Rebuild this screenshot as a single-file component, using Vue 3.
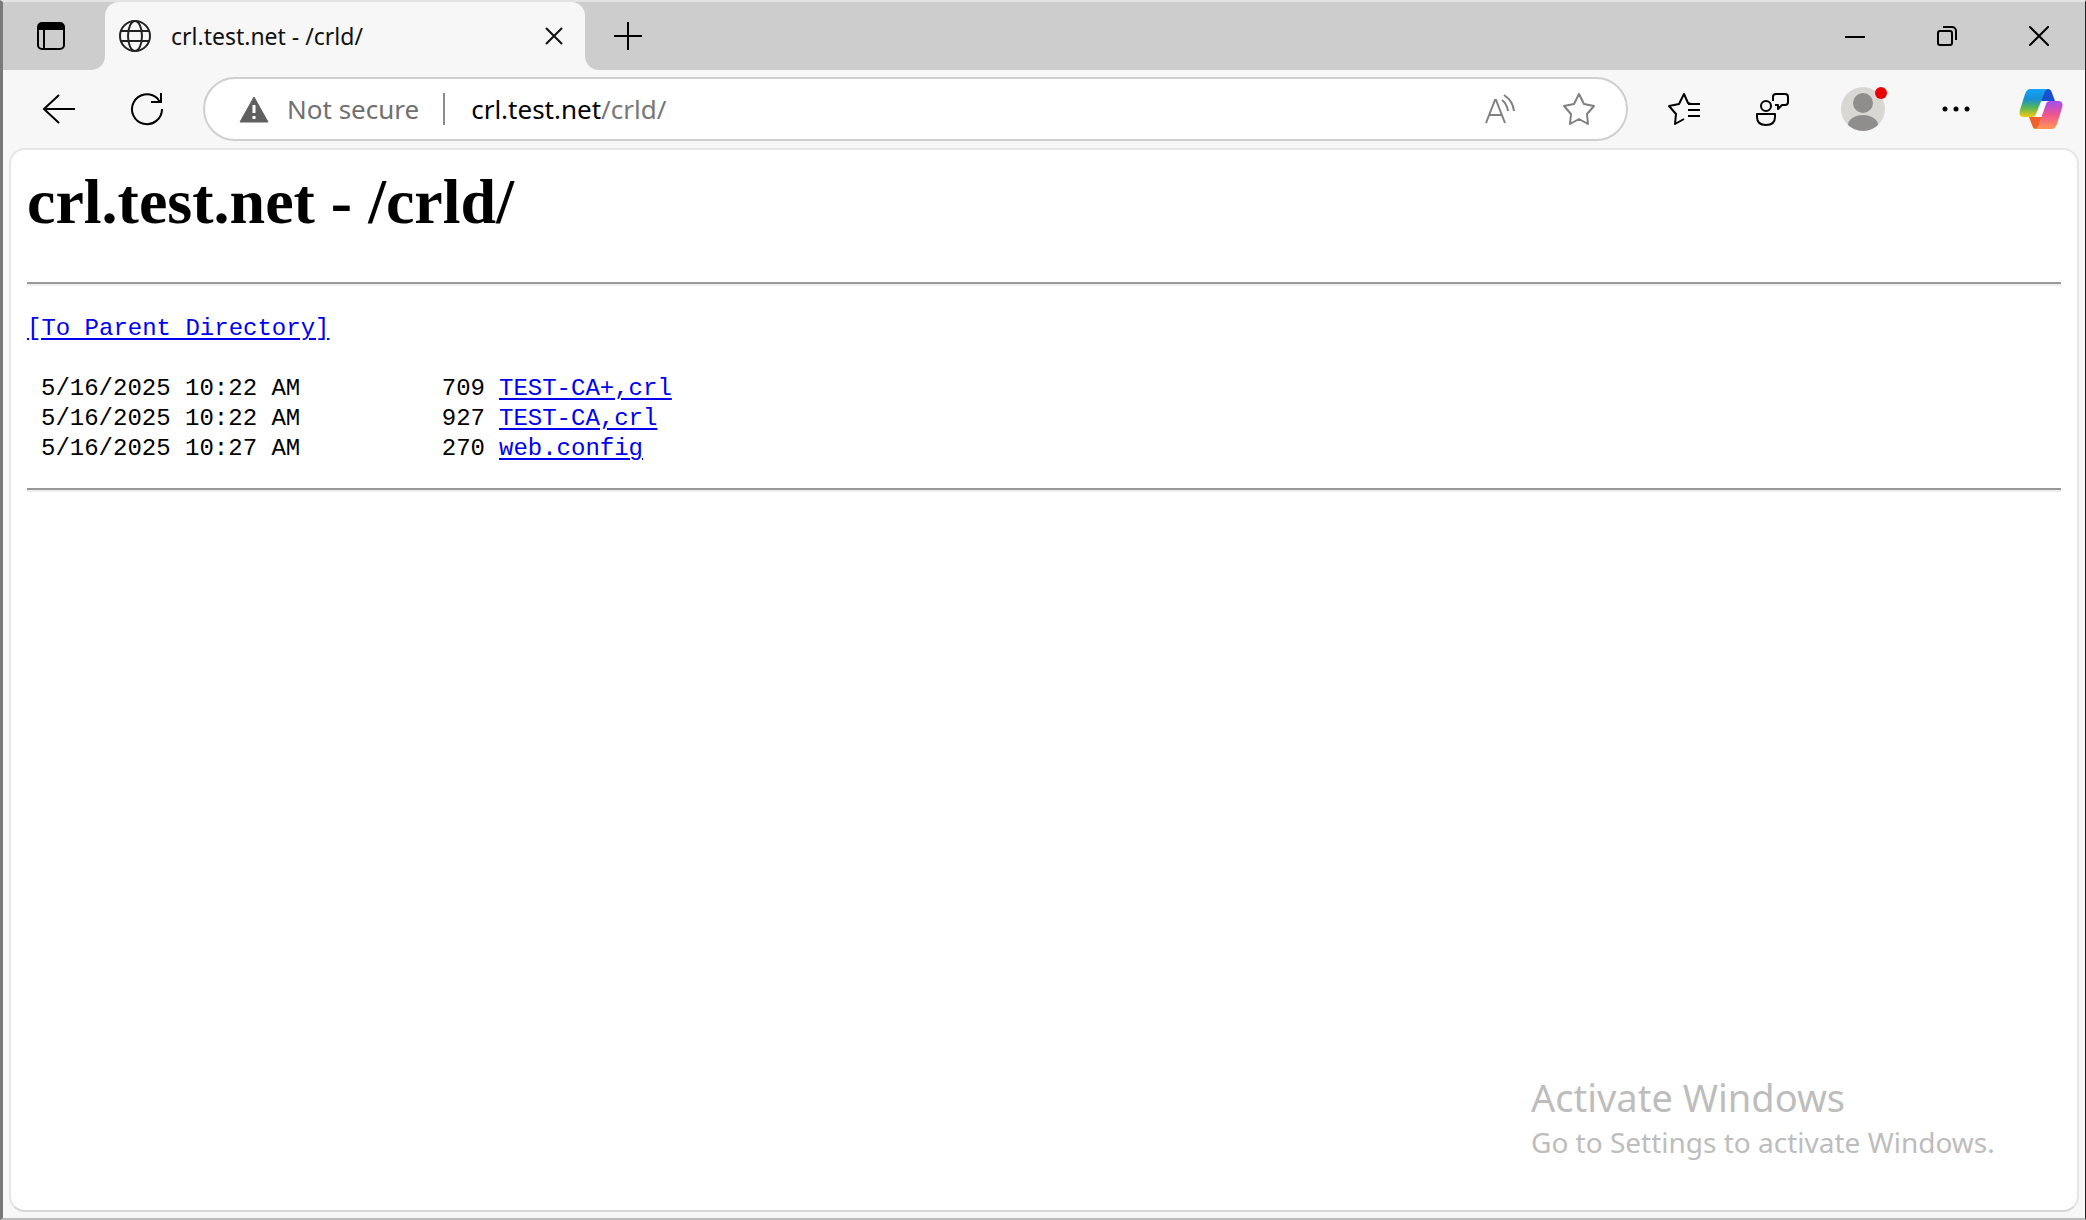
<template>
  <div class="window">
    <header class="tab-strip">
      <button type="button" class="icon-btn tab-actions" aria-label="Tab actions menu">
        <svg width="28" height="28" viewBox="0 0 28 28">
          <rect x="1" y="1" width="26" height="26" rx="4" fill="none" stroke="#000" stroke-width="2" />
          <path d="M1 8V4a3 3 0 0 1 3-3h20a3 3 0 0 1 3 3v4z" />
          <path d="M7 8v19" stroke="#000" stroke-width="2" />
        </svg>
      </button>
      <div class="tab">
        <svg class="globe" width="34" height="34" viewBox="0 0 34 34">
          <g fill="none" stroke="#222" stroke-width="2">
            <circle cx="17" cy="17" r="15" />
            <ellipse cx="17" cy="17" rx="7" ry="15" />
            <path d="M3 12h28M3 22h28" />
          </g>
        </svg>
        <span class="tab-title">{{ title }}</span>
        <button type="button" class="icon-btn tab-close" aria-label="Close tab">
          <svg width="18" height="18" viewBox="0 0 18 18">
            <path d="M1 1l16 16M17 1L1 17" stroke="#111" stroke-width="2" />
          </svg>
        </button>
      </div>
      <button type="button" class="icon-btn new-tab" aria-label="New tab">
        <svg width="30" height="30" viewBox="0 0 30 30">
          <path d="M15 1v28M1 15h28" stroke="#000" stroke-width="2" />
        </svg>
      </button>
      <div class="caption-buttons">
        <button type="button" class="icon-btn caption" aria-label="Minimize">
          <svg width="20" height="20" viewBox="0 0 20 20"><path d="M0 11h20" stroke="#000" stroke-width="2" /></svg>
        </button>
        <button type="button" class="icon-btn caption" aria-label="Restore">
          <svg width="20" height="20" viewBox="0 0 20 20" fill="none" stroke="#000" stroke-width="2">
            <rect x="1" y="5" width="14" height="14" rx="2" />
            <path d="M6 1h9a4 4 0 0 1 4 4v9" />
          </svg>
        </button>
        <button type="button" class="icon-btn caption" aria-label="Close">
          <svg width="20" height="20" viewBox="0 0 20 20"><path d="M0 0l20 20M20 0L0 20" stroke="#000" stroke-width="2" /></svg>
        </button>
      </div>
    </header>

    <nav class="toolbar">
      <button type="button" class="icon-btn nav-btn" aria-label="Back">
        <svg width="34" height="34" viewBox="0 0 34 34" fill="none" stroke="#000" stroke-width="2">
          <path d="M33 17H2M17 3L2 17l15 14" />
        </svg>
      </button>
      <button type="button" class="icon-btn nav-btn" aria-label="Refresh">
        <svg width="34" height="34" viewBox="0 0 34 34" fill="none" stroke="#000" stroke-width="2">
          <path d="M32 17A15 15 0 1 1 27 6l3 4" />
          <path d="M31 1v9H21" />
        </svg>
      </button>

      <div class="address-bar">
        <button type="button" class="icon-btn security">
          <svg width="30" height="27" viewBox="0 0 30 27">
            <path d="M15 1L29 26H1z" fill="#606060" stroke="#606060" stroke-linejoin="round" />
            <path d="M15 9v8M15 20v3" stroke="#fff" stroke-width="3" />
          </svg>
          <span>Not secure</span>
        </button>
        <span class="divider"></span>
        <a class="url" href="#">crl.test.net<span class="url-path">/crld/</span></a>
        <button type="button" class="icon-btn read-aloud" aria-label="Read aloud">
          <svg width="32" height="30" viewBox="0 0 32 30" fill="none" stroke="#808080" stroke-width="2">
            <path d="M2 29L11 6h1l9 23M5 21h13" />
            <path d="M18 6q5 4 6 11M20 1q9 6 10 16" />
          </svg>
        </button>
        <button type="button" class="icon-btn favorite" aria-label="Add to favorites">
          <svg width="34" height="34" viewBox="0 0 34 34" fill="none" stroke="#808080" stroke-width="2" stroke-linejoin="round">
            <path d="M17 2l5 10 10 2-7 8 1 10-9-5-9 5 1-10-7-8 10-2z" />
          </svg>
        </button>
      </div>

      <div class="actions">
        <button type="button" class="icon-btn action" aria-label="Favorites">
          <svg width="34" height="34" viewBox="0 0 34 34" fill="none" stroke="#000" stroke-width="2" stroke-linejoin="round">
            <path d="M24 12l-3-1-4-9-5 10-10 2 7 8-1 10 9-5" />
            <path d="M21 12h12M21 18h12M21 24h12" />
          </svg>
        </button>
        <button type="button" class="icon-btn action" aria-label="Send feedback">
          <svg width="34" height="34" viewBox="0 0 34 34" fill="none" stroke="#000" stroke-width="2" stroke-linejoin="round">
            <circle cx="11" cy="14" r="5" />
            <path d="M2 22h18v3q0 8-9 8t-9-8z" />
            <path d="M18 9V5q0-3 3-3h9q3 0 3 3v5q0 3-3 3h-3l-4 4v-4h-3" />
          </svg>
        </button>
        <button type="button" class="icon-btn action profile" aria-label="Profile">
          <svg width="46" height="46" viewBox="0 0 46 46">
            <defs>
              <clipPath id="face"><circle cx="22" cy="23" r="22" /></clipPath>
            </defs>
            <circle cx="22" cy="23" r="22" fill="#d9d7d4" />
            <g clip-path="url(#face)" fill="#8f8e8d">
              <circle cx="22" cy="17" r="10" />
              <ellipse cx="22" cy="39" rx="15" ry="10" />
            </g>
            <circle cx="40" cy="7" r="6" fill="#eb0000" />
          </svg>
        </button>
        <button type="button" class="icon-btn action" aria-label="Settings and more">
          <svg width="28" height="6" viewBox="0 0 28 6">
            <circle cx="3" cy="3" r="2.5" />
            <circle cx="14" cy="3" r="2.5" />
            <circle cx="25" cy="3" r="2.5" />
          </svg>
        </button>
        <button type="button" class="icon-btn action copilot" aria-label="Copilot">
          <svg width="44" height="42" viewBox="0 0 44 42">
            <defs>
              <linearGradient id="cool" x1="0" y1="0" x2="0" y2="1">
                <stop offset="0" stop-color="#16a5f5" />
                <stop offset=".35" stop-color="#168fd6" />
                <stop offset=".65" stop-color="#52b55a" />
                <stop offset="1" stop-color="#f5cb12" />
              </linearGradient>
              <linearGradient id="warm" x1="0" y1="0" x2="0" y2="1">
                <stop offset="0" stop-color="#a24cf0" />
                <stop offset=".5" stop-color="#f0558f" />
                <stop offset="1" stop-color="#ff9a52" />
              </linearGradient>
            </defs>
            <path d="M23 12h6l-6 18h-6z" fill="#fff" />
            <path d="M24 1h5q3 0 4 4l3 8H22z" fill="#1a50d0" />
            <path d="M22 41h-5q-3 0-4-4l-3-8h13z" fill="#f0602a" />
            <path d="M11 1h18q-3 1-4 5l-8 20q-1 3-4 3H5q-6 0-4-7L6 6q2-5 5-5z" fill="url(#cool)" />
            <path d="M33 41H16q3-1 4-5l7-20q1-3 4-3h8q6 0 4 7l-5 16q-2 5-5 5z" fill="url(#warm)" />
          </svg>
        </button>
      </div>
    </nav>

    <main class="page">
      <h1>{{ title }}</h1>
      <hr />
      <a class="parent" href="#">[To Parent Directory]</a>
      <table class="listing">
        <tbody>
          <tr v-for="file in files" :key="file.name">
            <td class="date">{{ file.date }}</td>
            <td class="size">{{ file.size }}</td>
            <td class="name"><a href="#">{{ file.name }}</a></td>
          </tr>
        </tbody>
      </table>
      <hr />
    </main>

    <aside class="watermark">
      <p class="watermark-title">Activate Windows</p>
      <p class="watermark-text">Go to Settings to activate Windows.</p>
    </aside>
  </div>
</template>

<script setup>
const title = "crl.test.net - /crld/";

const files = [
  { date: "5/16/2025 10:22 AM", size: 709, name: "TEST-CA+,crl" },
  { date: "5/16/2025 10:22 AM", size: 927, name: "TEST-CA,crl" },
  { date: "5/16/2025 10:27 AM", size: 270, name: "web.config" },
];
</script>

<style>
body {
  background: #f7f7f7;
}
</style>

<style scoped>
.window {
  box-sizing: border-box;
  position: relative;
  display: flex;
  flex-direction: column;
  min-height: 100vh;
  padding-bottom: 6px;
  background: #f7f7f7;
  border-top: 2px solid #e3e3e3;
  border-right: 1px solid #222;
  border-bottom: 2px solid #bbb;
  border-left: 3px solid #77797b;
  font-family: "Noto Sans", "Open Sans", sans-serif;
}

.icon-btn {
  display: inline-flex;
  align-items: center;
  justify-content: center;
  padding: 0;
  border: 0;
  background: transparent;
  font: inherit;
  flex-shrink: 0;
}

.tab-strip {
  display: flex;
  height: 68px;
  background: #f7f7f7;
}

.tab-actions {
  width: 102px;
  padding-right: 6px;
  background: #cdcdcd;
  border-bottom-right-radius: 14px;
}

/* the strip colour shows behind the rounded top corners */
.tab {
  box-sizing: border-box;
  display: flex;
  align-items: center;
  width: 480px;
  padding: 0 19px 0 13px;
  background: linear-gradient(#cdcdcd, #cdcdcd) top / 100% 20px no-repeat;
  position: relative;
  z-index: 0;
}

.tab::before {
  content: "";
  position: absolute;
  inset: 0;
  z-index: -1;
  background: #f7f7f7;
  border-radius: 14px 14px 0 0;
}

.tab-title {
  flex: 1;
  margin-left: 19px;
  font-size: 23px;
  line-height: 30px;
  color: #111;
}

.tab-close {
  width: 24px;
  height: 24px;
}

.new-tab {
  width: 86px;
  background: #cdcdcd;
  border-bottom-left-radius: 14px;
}

.caption-buttons {
  flex: 1;
  display: flex;
  justify-content: flex-end;
  background: #cdcdcd;
}

.caption {
  width: 92px;
}

.toolbar {
  display: flex;
  align-items: center;
  height: 78px;
  padding-left: 12px;
}

.nav-btn {
  width: 88px;
  height: 64px;
}

.address-bar {
  box-sizing: border-box;
  flex: 1;
  display: flex;
  align-items: center;
  height: 64px;
  margin-left: 12px;
  padding: 0 30px 0 34px;
  background: #fff;
  border: 2px solid #cfcfcf;
  border-radius: 32px;
  font-size: 26px;
}

.security {
  gap: 18px;
  color: #707070;
}

.divider {
  width: 2px;
  height: 32px;
  margin: 0 26px 0 24px;
  background: #8c8c8c;
}

.url {
  flex: 1;
  color: #000;
  text-decoration: none;
}

.url-path {
  color: #777;
}

.favorite {
  margin-left: 46px;
}

.actions {
  display: flex;
  margin-left: 12px;
  padding-right: 3px;
}

.action {
  width: 88px;
  height: 64px;
}

.profile {
  width: 96px;
}

.copilot {
  width: 82px;
}

.page {
  flex: 1;
  box-sizing: border-box;
  margin: 0 6px;
  padding: 0 16px;
  background: #fff;
  border: 2px solid #e6e6e6;
  border-bottom-color: #d6d6d6;
  border-radius: 16px;
}

h1 {
  margin: 16px 0 44px;
  font-family: "Liberation Serif", serif;
  font-size: 64px;
  line-height: 72px;
  color: #000;
}

hr {
  margin: 0;
  border: 0;
  height: 2px;
  background: #999;
  border-bottom: 2px solid #eee;
}

.parent,
.listing {
  font-family: "Liberation Mono", monospace;
  font-size: 24px;
  line-height: 30px;
}

.parent {
  display: block;
  width: max-content;
  margin: 28px 0 30px;
}

a {
  color: #0000ee;
  text-underline-offset: 3px;
}

.listing {
  margin-bottom: 24px;
  border-collapse: collapse;
  color: #000;
}

.listing td {
  padding: 0;
}

.listing .date {
  padding-left: 14px;
  width: 262px;
}

.listing .size {
  width: 182px;
  text-align: right;
}

.listing .name {
  padding-left: 14px;
}

.watermark {
  position: absolute;
  right: 82px;
  bottom: 54px;
  width: 472px;
  color: #bdbdbd;
  white-space: nowrap;
}

.watermark p {
  margin: 0;
}

.watermark-title {
  font-size: 38px;
  line-height: 46px;
}

.watermark-text {
  font-size: 28px;
  line-height: 44px;
}
</style>
